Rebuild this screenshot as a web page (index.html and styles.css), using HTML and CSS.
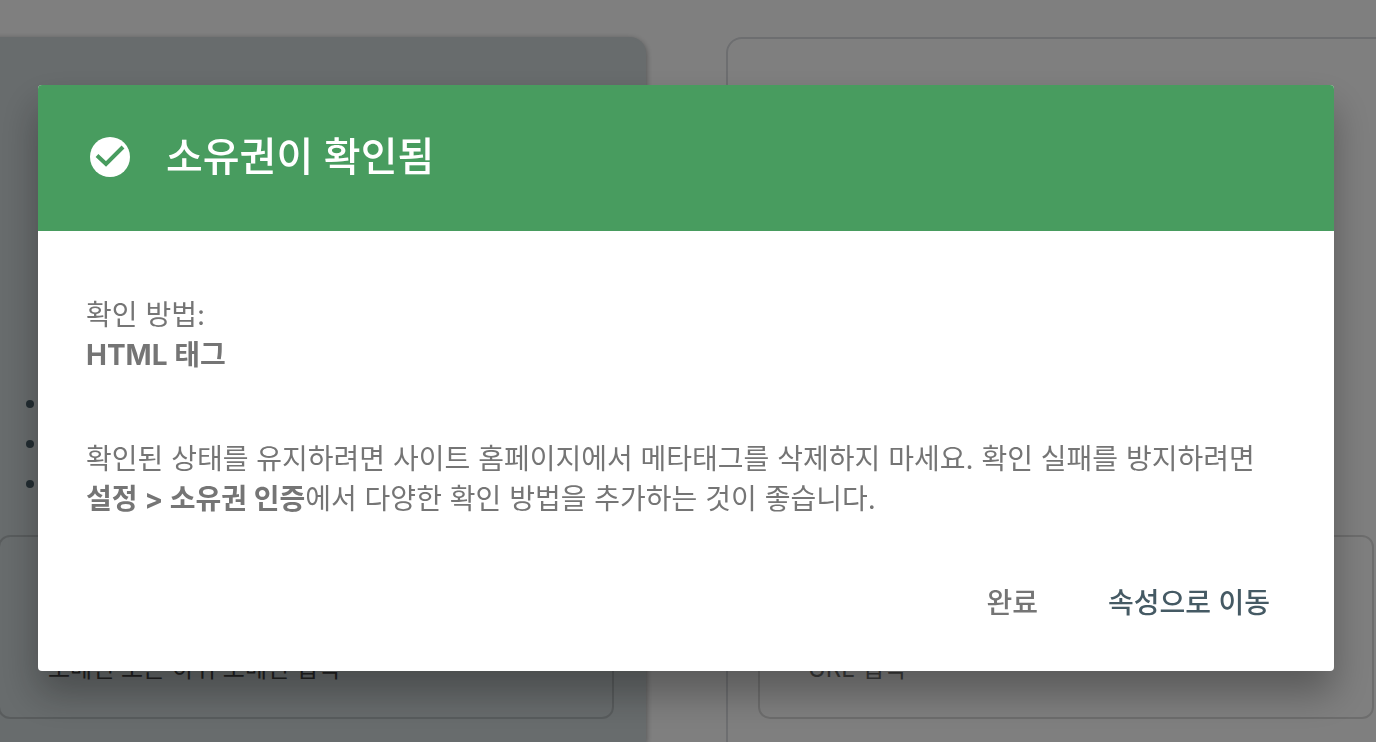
FILE: index.html
```html
<!DOCTYPE html>
<html lang="ko">
<head>
  <meta charset="UTF-8">
  <meta name="viewport" content="width=device-width, initial-scale=1.0">
  <title>소유권이 확인됨</title>
  <link rel="stylesheet" href="styles.css">
</head>
<body>

  <main class="property-types">
    <section class="card card-selected">
      <div class="card-intro">
        <ul class="features">
          <li></li>
          <li></li>
          <li></li>
        </ul>
      </div>
      <div class="field">
        <input type="text" id="domain">
        <label for="domain">도메인 또는 하위 도메인 입력</label>
      </div>
    </section>

    <section class="card">
      <div class="card-intro"></div>
      <div class="field">
        <input type="text" id="url">
        <label for="url">URL 입력</label>
      </div>
    </section>
  </main>

  <div class="overlay">
    <div class="dialog" role="dialog" aria-modal="true" aria-labelledby="dialogTitle">
      <div class="dialog-header">
        <svg class="check-icon" viewBox="0 0 48 48" aria-hidden="true">
          <circle cx="24" cy="24" r="20" fill="#fff"/>
          <path d="M11 22.5l9 8.5 17-17" fill="none" stroke="#489c5f" stroke-width="4"/>
        </svg>
        <h1 id="dialogTitle">소유권이 확인됨</h1>
      </div>
      <div class="dialog-body">
        <p>확인 방법:<br><strong>HTML 태그</strong></p>
        <p>확인된 상태를 유지하려면 사이트 홈페이지에서 메타태그를 삭제하지 마세요. 확인 실패를 방지하려면 <strong>설정 &gt; 소유권 인증</strong>에서 다양한 확인 방법을 추가하는 것이 좋습니다.</p>
      </div>
      <div class="dialog-actions">
        <button type="button">완료</button>
        <button type="button" class="primary">속성으로 이동</button>
      </div>
    </div>
  </div>

</body>
</html>
```
FILE: styles.css
```css
* {
  box-sizing: border-box;
}

body {
  margin: 0;
  min-height: 100vh;
  overflow: hidden;
  background-color: #fff;
  font-family: Inter, "Noto Sans CJK KR", sans-serif;
  font-size: 28px;
  line-height: 40px;
}

/* The two cards run past both sides of the window */
.property-types {
  display: grid;
  grid-template-columns: minmax(0, 1fr) minmax(0, 1fr);
  gap: 80px;
  height: 100vh;
  margin: 0 -30px 0 -34px;
  padding-top: 37px;
  overflow: hidden;
}

.card {
  padding: 0 30px;
  border: 2px solid #dadce0;
  border-bottom: none;
  border-radius: 16px 16px 0 0;
}

.card-selected {
  border-color: #d0d8da;
  background-color: #d0d8da;
  box-shadow: 0 2px 6px rgba(0, 0, 0, 0.4);
}

.card-intro {
  display: flex;
  align-items: flex-end;
  height: 496px;
  padding-bottom: 31px;
}

.features {
  margin: 0;
  padding: 0 28px;
  list-style: none;
}

.features li {
  display: flex;
  align-items: center;
  height: 40px;
}

.features li::before {
  content: "";
  width: 8px;
  height: 8px;
  border-radius: 50%;
  background-color: #455a64;
}

.field {
  padding: 32px 48px 28px;
  border: 2px solid rgba(0, 0, 0, 0.14);
  border-radius: 12px;
}

.field input {
  display: block;
  width: 100%;
  height: 80px;
  border: none;
  background: none;
  font: inherit;
}

.field label {
  display: block;
  font-size: 24px;
  color: #757575;
}

.card-selected .field label {
  color: #444;
}

.overlay {
  position: fixed;
  inset: 0;
  display: flex;
  align-items: flex-start;
  padding: 85px 42px 71px 38px;
  background-color: rgba(0, 0, 0, 0.5);
}

.dialog {
  flex: 1;
  overflow: hidden;
  border-radius: 4px;
  background-color: #fff;
  color: #757575;
  box-shadow: 0 22px 38px rgba(0, 0, 0, 0.3);
}

.dialog-header {
  display: flex;
  align-items: center;
  gap: 32px;
  padding: 43px 48px 45px;
  background-color: #489c5f;
  color: #fff;
}

.dialog-header h1 {
  margin: 0;
  font-size: 40px;
  font-weight: 500;
  line-height: 58px;
}

.check-icon {
  width: 48px;
  height: 48px;
}

.dialog-body {
  padding: 64px 48px 48px;
}

.dialog-body p {
  margin: 0;
}

.dialog-body p + p {
  margin-top: 64px;
}

.dialog-body strong {
  font-weight: 700;
}

.dialog-actions {
  display: flex;
  justify-content: flex-end;
  gap: 38px;
  padding: 0 48px 32px;
}

.dialog-actions button {
  height: 72px;
  padding: 0 16px;
  border: none;
  background: none;
  color: #757575;
  font: inherit;
  font-weight: 500;
  cursor: pointer;
}

.dialog-actions .primary {
  color: #455a64;
}
```
